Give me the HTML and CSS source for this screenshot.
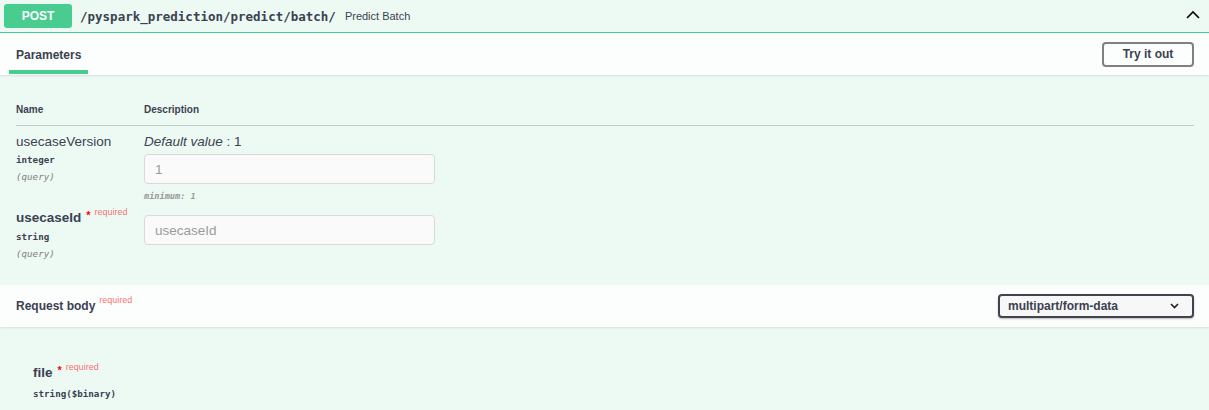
FILE: index.html
```html
<!DOCTYPE html>
<html>
<head>
<meta charset="utf-8">
<link rel="stylesheet" href="styles.css">
</head>
<body>
<div class="opblock">
  <div class="summary">
    <span class="method">POST</span>
    <span class="path">/pyspark_prediction/predict/batch/</span>
    <span class="summary-desc">Predict Batch</span>
    <svg class="chev-up" width="14" height="9" viewBox="0 0 14 9"><path d="M1 8 L7 2 L13 8" fill="none" stroke="#000" stroke-width="1.6"/></svg>
  </div>
  <div class="section-header">
    <div class="tab">Parameters</div>
    <button class="try-out">Try it out</button>
  </div>
  <div class="params">
    <div class="params-head">
      <div class="col-name">Name</div>
      <div class="col-desc">Description</div>
    </div>
    <div class="param-row first">
      <div class="col-name">
        <div class="param-name">usecaseVersion</div>
        <div class="param-type">integer</div>
        <div class="param-in">(query)</div>
      </div>
      <div class="col-desc">
        <div class="default"><i>Default value</i> : 1</div>
        <input class="field" type="text" placeholder="1">
        <div class="minimum">minimum: 1</div>
      </div>
    </div>
    <div class="param-row second">
      <div class="col-name">
        <div class="param-name bold">usecaseId<span class="star">*</span><span class="req">required</span></div>
        <div class="param-type">string</div>
        <div class="param-in">(query)</div>
      </div>
      <div class="col-desc">
        <input class="field" type="text" placeholder="usecaseId">
      </div>
    </div>
  </div>
  <div class="section-header body-header">
    <div class="body-title">Request body<span class="req-sup">required</span></div>
    <div class="select">
      <span>multipart/form-data</span>
      <svg width="9" height="6" viewBox="0 0 9 6"><path d="M1 1 L4.5 4.5 L8 1" fill="none" stroke="#222" stroke-width="1.6"/></svg>
    </div>
  </div>
  <div class="body-content">
    <div class="param-name bold">file<span class="star">*</span><span class="req">required</span></div>
    <div class="param-type">string($binary)</div>
  </div>
</div>
</body>
</html>
```
FILE: styles.css
```css
html, body {
  margin: 0;
  padding: 0;
}
body {
  background: #edfaf4;
  font-family: "Liberation Sans", Arial, sans-serif;
  color: #3b4151;
  width: 1209px;
  height: 410px;
  overflow: hidden;
}
.summary {
  display: flex;
  align-items: center;
  height: 32px;
  border-bottom: 1px solid #49cc90;
  padding: 0 9px 0 4px;
}
.method {
  width: 68px;
  height: 24px;
  background: #49cc90;
  border-radius: 3px;
  color: #fff;
  font-weight: bold;
  font-size: 12px;
  display: flex;
  align-items: center;
  justify-content: center;
  margin-top: -1px;
}
.path {
  font-family: "DejaVu Sans Mono", monospace;
  font-weight: bold;
  font-size: 12.5px;
  margin-left: 8px;
  color: #3b4151;
}
.summary-desc {
  font-size: 11px;
  margin-left: 9px;
  color: #3b4151;
}
.chev-up {
  margin-left: auto;
  margin-top: -3px;
}
.section-header {
  height: 42px;
  background: rgba(255, 255, 255, 0.8);
  box-shadow: 0 1px 2px rgba(0, 0, 0, 0.1);
  display: flex;
  align-items: center;
  justify-content: space-between;
  padding: 0 15px 0 9px;
}
.tab {
  align-self: stretch;
  width: 79px;
  position: relative;
  font-size: 12px;
  font-weight: bold;
  padding-left: 7px;
  box-sizing: border-box;
  display: flex;
  align-items: center;
  padding-top: 1px;
}
.tab::after {
  content: "";
  position: absolute;
  left: 0;
  right: 0;
  bottom: 1px;
  height: 4px;
  background: #49cc90;
}
.try-out {
  width: 92px;
  height: 25px;
  border: 2px solid #808080;
  border-radius: 4px;
  background: transparent;
  font-family: "Liberation Sans", Arial, sans-serif;
  font-weight: bold;
  font-size: 12px;
  color: #3b4151;
}
.params {
  padding: 0 15px 0 16px;
}
.params-head {
  display: flex;
  padding-top: 28px;
  padding-bottom: 9px;
  border-bottom: 1px solid rgba(59, 65, 81, 0.25);
  font-size: 10px;
  font-weight: bold;
  line-height: 12px;
  margin-top: 1px;
}
.col-name {
  width: 128px;
  flex-shrink: 0;
}
.col-desc {
  flex: 1;
}
.param-row {
  display: flex;
}
.param-row.first {
  padding-top: 8px;
}
.param-row.second {
  padding-top: 8px;
  padding-bottom: 25px;
}
.param-name {
  font-size: 13.5px;
  line-height: 16px;
}
.param-name.bold {
  font-weight: bold;
}
.star {
  color: red;
  font-size: 11px;
  margin-left: 5px;
  position: relative;
  top: -3px;
}
.req {
  color: rgba(255, 0, 0, 0.6);
  font-size: 9px;
  font-weight: normal;
  margin-left: 4px;
  position: relative;
  top: -7px;
}
.param-type {
  font-family: "DejaVu Sans Mono", monospace;
  font-weight: bold;
  font-size: 9.2px;
  line-height: 12px;
  margin-top: 4px;
}
.param-in {
  font-family: "DejaVu Sans Mono", monospace;
  font-style: italic;
  font-size: 9.2px;
  line-height: 12px;
  color: #808080;
  margin-top: 5px;
}
.default {
  font-size: 13.5px;
  line-height: 16px;
}
.field {
  display: block;
  box-sizing: border-box;
  width: 291px;
  height: 30px;
  margin-top: 4px;
  border: 1px solid #d9d9d9;
  border-radius: 4px;
  background: #fafafa;
  padding: 0 10px;
  font-family: "Liberation Sans", Arial, sans-serif;
  font-size: 13.5px;
  color: #3b4151;
}
.field::placeholder {
  color: #9a9a9a;
}
.param-row.second .field {
  margin-top: 5px;
}
.minimum {
  font-family: "DejaVu Sans Mono", monospace;
  font-style: italic;
  font-weight: bold;
  font-size: 8.6px;
  line-height: 12px;
  color: #999;
  margin-top: 6px;
}
.body-header {
  padding: 0 15px 0 16px;
}
.body-title {
  font-size: 12px;
  font-weight: bold;
}
.req-sup {
  color: rgba(255, 0, 0, 0.6);
  font-size: 9px;
  font-weight: normal;
  margin-left: 4px;
  position: relative;
  top: -7px;
}
.select {
  width: 196px;
  height: 24px;
  box-sizing: border-box;
  border: 2px solid #41444e;
  border-radius: 4px;
  background: #f7f7f7;
  display: flex;
  align-items: center;
  justify-content: space-between;
  padding: 0 13px 0 8px;
  font-size: 12px;
  font-weight: bold;
  box-shadow: 0 1px 2px rgba(0, 0, 0, 0.25);
}
.body-content {
  padding: 38px 0 0 33px;
}
.body-content .param-type {
  margin-top: 6px;
}
```
